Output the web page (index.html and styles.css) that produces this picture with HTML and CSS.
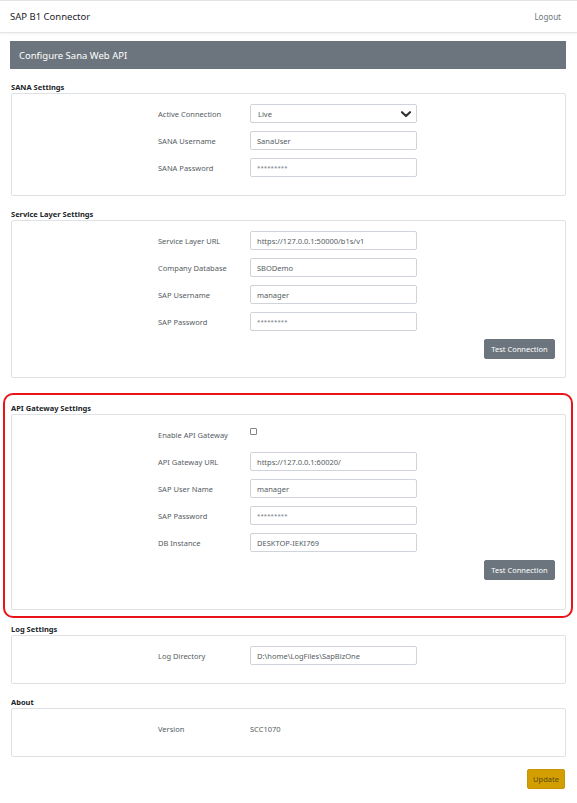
FILE: index.html
```html
<!DOCTYPE html>
<html>
<head>
<meta charset="utf-8">
<link rel="stylesheet" href="styles.css">
</head>
<body>
<nav class="navbar">
  <span class="brand">SAP B1 Connector</span>
  <span class="logout">Logout</span>
</nav>
<main class="main">
  <div class="page-title">Configure Sana Web API</div>

  <section class="group">
    <div class="group-title">SANA Settings</div>
    <div class="box">
      <div class="row"><span class="label">Active Connection</span>
        <div class="input select">Live
          <svg class="chev" width="10" height="7" viewBox="0 0 10 7"><path d="M1 1.2 L5 5 L9 1.2" fill="none" stroke="#333" stroke-width="2.2" stroke-linecap="round" stroke-linejoin="round"/></svg>
        </div></div>
      <div class="row"><span class="label">SANA Username</span><div class="input">SanaUser</div></div>
      <div class="row"><span class="label">SANA Password</span><div class="input pw">*********</div></div>
    </div>
  </section>

  <section class="group">
    <div class="group-title">Service Layer Settings</div>
    <div class="box">
      <div class="row"><span class="label">Service Layer URL</span><div class="input">https://127.0.0.1:50000/b1s/v1</div></div>
      <div class="row"><span class="label">Company Database</span><div class="input">SBODemo</div></div>
      <div class="row"><span class="label">SAP Username</span><div class="input">manager</div></div>
      <div class="row"><span class="label">SAP Password</span><div class="input pw">*********</div></div>
      <div class="actions"><button class="btn btn-gray">Test Connection</button></div>
    </div>
  </section>

  <div class="highlight">
    <section class="group first">
      <div class="group-title">API Gateway Settings</div>
      <div class="box box-tall">
        <div class="row"><span class="label">Enable API Gateway</span><span class="checkbox"></span></div>
        <div class="row"><span class="label">API Gateway URL</span><div class="input">https://127.0.0.1:60020/</div></div>
        <div class="row"><span class="label">SAP User Name</span><div class="input">manager</div></div>
        <div class="row"><span class="label">SAP Password</span><div class="input pw">*********</div></div>
        <div class="row"><span class="label">DB Instance</span><div class="input">DESKTOP-IEKI769</div></div>
        <div class="actions"><button class="btn btn-gray">Test Connection</button></div>
      </div>
    </section>
  </div>

  <section class="group after-highlight">
    <div class="group-title">Log Settings</div>
    <div class="box">
      <div class="row"><span class="label">Log Directory</span><div class="input">D:\home\LogFiles\SapBizOne</div></div>
    </div>
  </section>

  <section class="group">
    <div class="group-title">About</div>
    <div class="box box-about">
      <div class="row"><span class="label">Version</span><span class="value">SCC1070</span></div>
    </div>
  </section>

  <div class="footer-actions"><button class="btn btn-gold">Update</button></div>
</main>
</body>
</html>
```
FILE: styles.css
```css
* { box-sizing: border-box; }
html, body { margin: 0; padding: 0; background: #fff; }
body {
  font-family: "Noto Sans", "Open Sans", sans-serif;
  color: #212529;
  width: 577px;
}
.navbar {
  height: 33px;
  border-top: 1px solid #e3e3e3;
  border-bottom: 1px solid #e6e6e6;
  box-shadow: 0 1px 2px rgba(0,0,0,0.06);
  display: flex;
  align-items: center;
  justify-content: space-between;
  padding: 0 16px 0 10px;
}
.brand { font-size: 9.5px; color: #212529; }
.logout { font-size: 8px; color: #6c757d; }
.main { padding: 0 11px 0 10px; }
.page-title {
  margin-top: 8px;
  height: 28px;
  background: #6c757d;
  color: #fff;
  font-size: 9.5px;
  display: flex;
  align-items: center;
  padding-left: 9px;
}
.group { margin-top: 12px; margin-left: 1px; }
.group-title {
  font-size: 7.5px;
  font-weight: 700;
  height: 12px;
  line-height: 12px;
  color: #212529;
}
.box {
  border: 1px solid #dee2e6;
  border-radius: 2px;
  padding: 10px 10px 18px 0;
}
.row {
  display: flex;
  align-items: center;
  height: 19px;
  margin-bottom: 8px;
}
.row:last-child { margin-bottom: 0; }
.label {
  margin-left: 146px;
  width: 92px;
  font-size: 7.5px;
  color: #555c63;
}
.input {
  width: 167px;
  height: 19px;
  border: 1px solid #ced4da;
  border-radius: 2px;
  font-size: 7.5px;
  color: #555c63;
  padding-left: 6px;
  display: flex;
  align-items: center;
  position: relative;
}
.input.pw { font-size: 6px; letter-spacing: 0.1px; color: #6c737a; }
.select { padding-left: 7px; }
.chev { position: absolute; right: 5px; top: 6px; }
.checkbox {
  width: 7px;
  height: 7px;
  border: 1px solid #858585;
  border-radius: 1px;
  align-self: flex-start;
  margin-top: 3px;
}
.value { font-size: 7.5px; color: #555c63; }
.actions {
  display: flex;
  justify-content: flex-end;
  margin-top: 7px;
}
.btn {
  font-family: inherit;
  font-size: 7.5px;
  height: 20px;
  border-radius: 2px;
  padding: 0 6px;
  cursor: pointer;
}
.btn-gray {
  background: #6c757d;
  border: 1px solid #6c757d;
  color: #fff;
  width: 71px;
  padding: 0;
}
.btn-gold {
  background: #d39e00;
  border: 1px solid #c69500;
  color: #5a4a10;
  width: 38px;
  padding: 0;
}
.highlight {
  margin: 15px -7px 0 -7px;
  border: 2px solid #e8141a;
  border-radius: 10px;
  padding: 7px 5px 6px 6px;
}
.group.first { margin-top: 0; margin-left: 0; }
.box-tall { padding-bottom: 29px; }
.after-highlight { margin-top: 5px; }
.box-about { padding-top: 10px; padding-bottom: 18px; }
.footer-actions {
  display: flex;
  justify-content: flex-end;
  margin-top: 12px;
  padding-right: 1px;
}
```
